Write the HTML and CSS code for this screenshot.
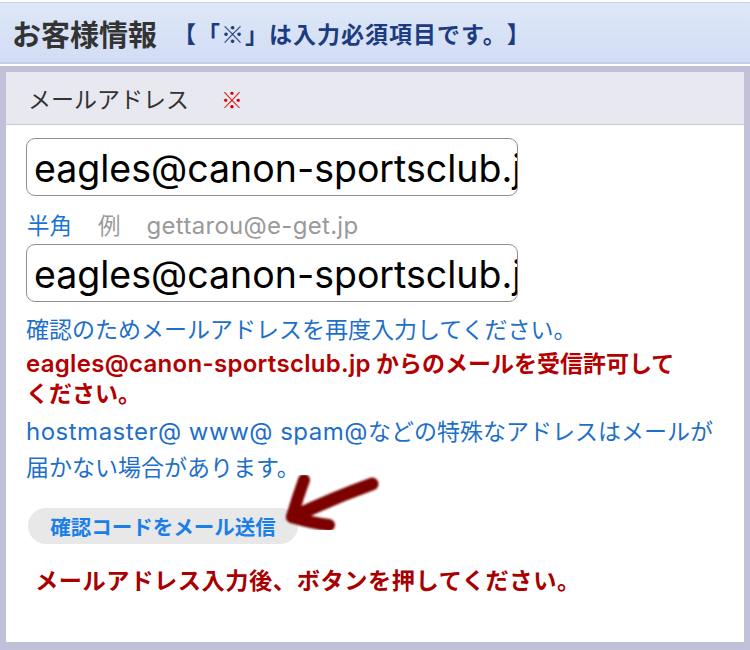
FILE: index.html
```html
<!DOCTYPE html>
<html lang="ja">
<head>
<meta charset="utf-8">
<title>お客様情報</title>
<link rel="stylesheet" href="styles.css">
</head>
<body>
<div class="page">
  <div class="header">
    <h1 class="title">お客様情報</h1>
    <span class="required-note">【「※」は入力必須項目です。】</span>
  </div>
  <div class="frame">
    <div class="label-row">
      <span class="label">メールアドレス</span>
      <span class="req">※</span>
    </div>
    <div class="content">
      <input class="field" type="text" value="eagles@canon-sportsclub.jp">
      <div class="hint"><span class="hint-kind">半角</span><span class="hint-ex">例</span><span class="hint-ex en">gettarou@e-get.jp</span></div>
      <input class="field" type="text" value="eagles@canon-sportsclub.jp">
      <p class="note-blue">確認のためメールアドレスを再度入力してください。</p>
      <p class="note-red"><span class="en">eagles@canon-sportsclub.jp</span> からのメールを受信許可して<br>ください。</p>
      <p class="note-blue tall"><span class="en">hostmaster@ www@ spam@</span>などの特殊なアドレスはメールが<br>届かない場合があります。</p>
      <button class="send-btn" type="button">確認コードをメール送信</button>
      <p class="after-note">メールアドレス入力後、ボタンを押してください。</p>
    </div>
  </div>
  <svg class="arrow" width="750" height="650" viewBox="0 0 750 650" aria-hidden="true">
    <defs>
      <filter id="soft" x="-10%" y="-10%" width="120%" height="120%">
        <feGaussianBlur stdDeviation="0.9"/>
      </filter>
    </defs>
    <g fill="none" stroke="#7b0000" stroke-linecap="round" stroke-linejoin="round" filter="url(#soft)">
      <path d="M372 482 Q333 496 293 515" stroke-width="13"/>
      <path d="M304 478 Q297 497 292 515" stroke-width="12"/>
      <path d="M292 515 Q311 521 329 523" stroke-width="12"/>
    </g>
  </svg>
</div>
</body>
</html>
```
FILE: styles.css
```css
html, body {
  margin: 0;
  padding: 0;
  background: #ffffff;
}

body {
  font-family: "Noto Sans CJK JP", sans-serif;
  text-spacing-trim: space-all;
  width: 750px;
  height: 650px;
  overflow: hidden;
}

.page {
  position: relative;
  width: 750px;
  height: 650px;
}

.en {
  font-family: Inter, "Noto Sans CJK JP", sans-serif;
  font-size: 24px;
  line-height: 1;
  letter-spacing: 0.5px;
}

.header {
  box-sizing: border-box;
  height: 62px;
  margin-top: 2px;
  padding-left: 12px;
  display: flex;
  align-items: center;
  gap: 16px;
  background: linear-gradient(#dde8f7, #d3dcf5);
  border-bottom: 2px solid #c4cde8;
  border-top: 1px solid #ccd6e8;
}

.title {
  margin: 0;
  font-size: 29px;
  font-weight: 700;
  color: #333333;
}

.required-note {
  font-size: 23px;
  font-weight: 700;
  letter-spacing: 1px;
  color: #1c3b80;
}

.frame {
  box-sizing: border-box;
  margin-top: 2px;
  height: 584px;
  padding: 6px 6px 8px 6px;
  background: #c0c0d8;
  display: flex;
  flex-direction: column;
}

.label-row {
  box-sizing: border-box;
  height: 53px;
  padding-left: 22px;
  display: flex;
  align-items: center;
  gap: 32px;
  background: #e8e8f1;
  border-bottom: 1px solid #c9c9da;
}

.label {
  font-size: 23px;
  color: #333333;
}

.req {
  font-size: 22px;
  color: #d40000;
}

.content {
  flex: 1;
  background: #ffffff;
  padding: 13px 20px 0 20px;
  display: flex;
  flex-direction: column;
  align-items: flex-start;
}

.field {
  box-sizing: border-box;
  width: 492px;
  height: 58px;
  margin: 0;
  padding: 2px 0 0 7px;
  border: 1.5px solid #8f8f8f;
  border-radius: 9px;
  background: #ffffff;
  font-family: Inter, sans-serif;
  font-size: 37.5px;
  color: #000000;
  outline: none;
}

.hint {
  display: flex;
  align-items: baseline;
  gap: 26px;
  height: 28px;
  line-height: 28px;
  margin: 14px 0 6px 1px;
  font-size: 22.5px;
}

.hint-kind {
  color: #1a73d6;
}

.hint-ex {
  color: #9a9a9a;
}

.hint .en {
  letter-spacing: 0.3px;
}

.note-blue {
  margin: 9px 0 0 0;
  font-size: 23px;
  line-height: 34px;
  color: #1e6fc9;
  white-space: nowrap;
}

.note-blue.tall {
  margin-top: 5px;
  line-height: 36px;
}

.note-red {
  margin: 2px 0 0 0;
  font-size: 23px;
  line-height: 30px;
  font-weight: 700;
  color: #b40000;
  white-space: nowrap;
}

.note-red .en {
  font-weight: 600;
  letter-spacing: 0.3px;
}

.send-btn {
  margin: 24px 0 0 2px;
  height: 36px;
  width: 270px;
  padding: 0;
  border: none;
  border-radius: 18px;
  background: #e8e8e8;
  font-family: "Noto Sans CJK JP", sans-serif;
  font-size: 20.5px;
  font-weight: 700;
  color: #1a7fe6;
}

.after-note {
  margin: 20px 0 0 9px;
  font-size: 23.2px;
  line-height: 30px;
  font-weight: 700;
  letter-spacing: 0.6px;
  color: #a80000;
  white-space: nowrap;
}

.arrow {
  position: absolute;
  left: 0;
  top: 0;
  pointer-events: none;
}
```
